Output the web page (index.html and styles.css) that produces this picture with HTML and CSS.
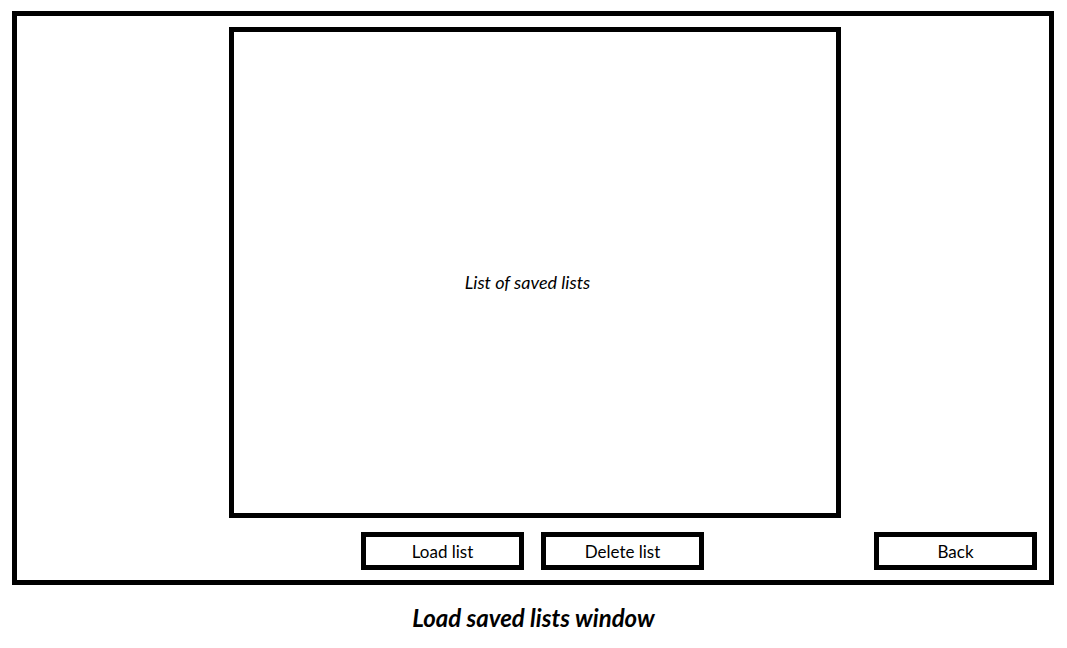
FILE: index.html
```html
<!DOCTYPE html>
<html>
<head lang="en">
    <meta charset="UTF-8">
    <title>Load saved lists window</title>
    <link rel="stylesheet" href="styles.css">
</head>
<body>
<div id="window">
    <div class="list-box">
        <span>List of saved lists</span>
    </div>
    <div class="btn-row">
        <div class="btn">Load list</div>
        <div class="btn">Delete list</div>
        <div class="btn btn-back">Back</div>
    </div>
</div>
<p class="caption">Load saved lists window</p>
</body>
</html>
```

FILE: styles.css
```css
body{padding:0;margin:0;background:#fff;color:#000;font-family:Lato,"Open Sans",sans-serif;}
#window{box-sizing:border-box;width:1042px;height:574px;margin:11px 0 0 12px;border:5px solid #000;padding:11px 0 0 0;}
.list-box{box-sizing:border-box;width:612px;height:491px;margin-left:212px;border:5px solid #000;display:flex;align-items:center;justify-content:center;padding:19px 15px 0 0;}
.list-box span{font-style:italic;font-size:18px;}
.btn-row{display:flex;gap:17px;padding:14px 12px 0 344px;}
.btn{box-sizing:border-box;width:163px;height:38px;border:5px solid #000;display:flex;align-items:center;justify-content:center;font-size:17px;padding-top:1px;}
.btn-back{margin-left:auto;}
.caption{margin:18px 0 0;text-align:center;font-weight:bold;font-style:italic;font-size:24px;}
```
